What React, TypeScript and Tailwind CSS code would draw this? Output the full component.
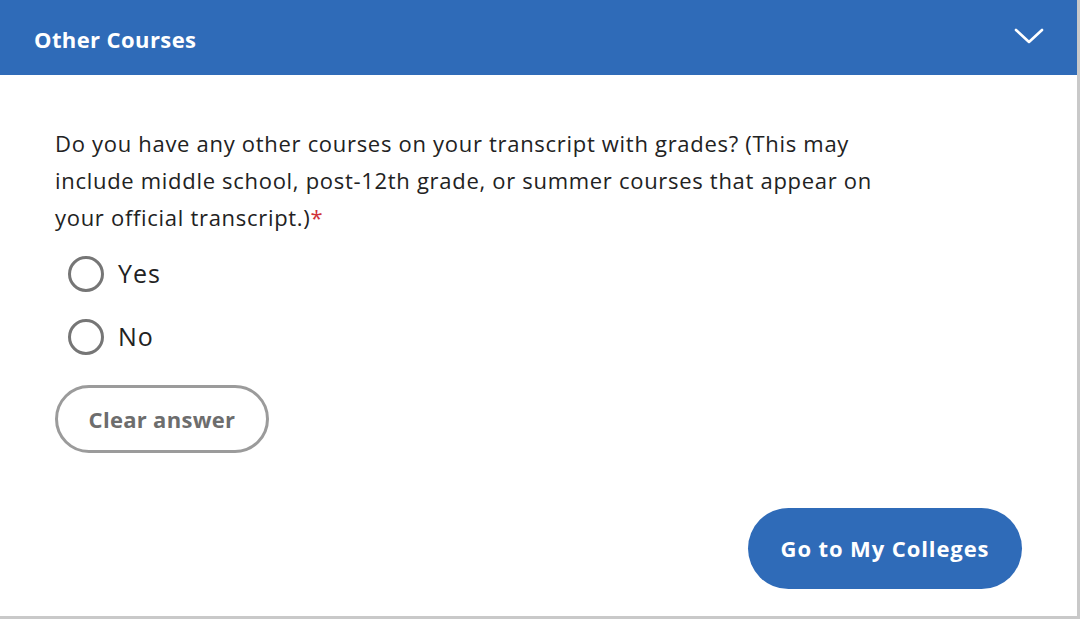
import React, { useState } from 'react';

const App = () => {
  const [answer, setAnswer] = useState<string | null>(null);

  return (
    <div className="h-[619px] w-[1080px] bg-white" style={{ fontFamily: '"Open Sans", "Liberation Sans", sans-serif' }}>
      <div className="h-[619px] w-[1080px] border-r-[3px] border-b-[3px] border-[#c9c9c9] flex flex-col">
        <div className="h-[75px] bg-[#2f6bb8] flex items-center justify-between pl-[34px] pr-[33px]">
          <h2 className="text-white text-[22px] font-bold tracking-[0.4px] mt-[3px]">Other Courses</h2>
          <svg width="30" height="18" viewBox="0 0 30 18" fill="none" className="mt-[-4px]">
            <path d="M2 3 L15 15 L28 3" stroke="white" strokeWidth="2.6" strokeLinecap="round" strokeLinejoin="round" />
          </svg>
        </div>

        <div className="flex-1 flex flex-col px-[55px]">
          <p className="mt-[50px] text-[22px] leading-[37px] text-[#222] tracking-[0.7px]">
            Do you have any other courses on your transcript with grades? (This may
            <br />
            include middle school, post-12th grade, or summer courses that appear on
            <br />
            your official transcript.)
            <span className="text-[#d0343a]">*</span>
          </p>

          <div className="mt-[20px] flex flex-col gap-[27px] pl-[13px]">
            {['Yes', 'No'].map((opt) => (
              <label key={opt} className="flex items-center gap-[14px] cursor-pointer h-[36px]">
                <span className="w-[36px] h-[36px] rounded-full border-[3px] border-[#767676] flex items-center justify-center">
                  {answer === opt && <span className="w-[18px] h-[18px] rounded-full bg-[#2f6bb8]" />}
                </span>
                <input type="radio" className="hidden" checked={answer === opt} onChange={() => setAnswer(opt)} />
                <span className="text-[25px] text-[#222] tracking-[1px]">{opt}</span>
              </label>
            ))}
          </div>

          <div className="mt-[30px]">
            <button
              onClick={() => setAnswer(null)}
              className="h-[68px] w-[214px] rounded-full border-[3px] border-[#9b9b9b] text-[#6d6d6d] text-[22px] font-bold tracking-[0.3px]"
            >
              Clear answer
            </button>
          </div>

          <div className="mt-[55px] flex justify-end">
            <button className="h-[81px] w-[274px] rounded-full bg-[#2f6bb8] text-white text-[22px] font-bold tracking-[0.9px]">
              Go to My Colleges
            </button>
          </div>
        </div>
      </div>
    </div>
  );
};

export default App;
